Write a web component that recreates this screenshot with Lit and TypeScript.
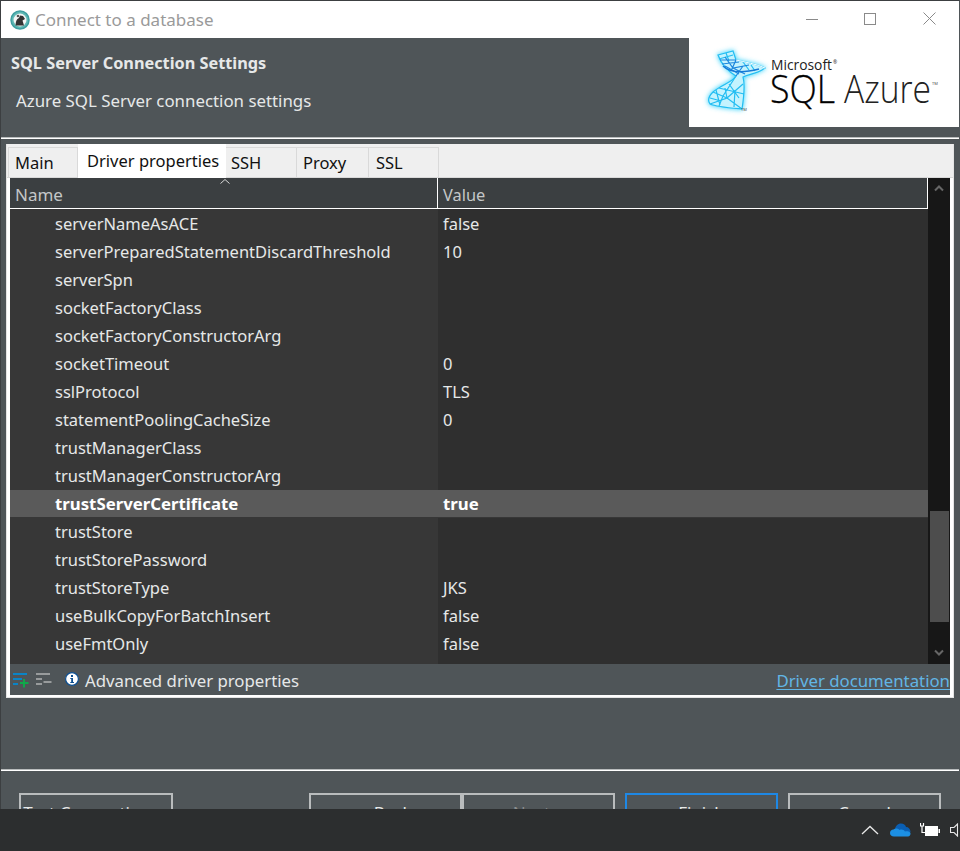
import { LitElement, html, css, svg } from 'lit';
import { customElement } from 'lit/decorators.js';

const ROWS: [string, string][] = [
  ['serverNameAsACE', 'false'],
  ['serverPreparedStatementDiscardThreshold', '10'],
  ['serverSpn', ''],
  ['socketFactoryClass', ''],
  ['socketFactoryConstructorArg', ''],
  ['socketTimeout', '0'],
  ['sslProtocol', 'TLS'],
  ['statementPoolingCacheSize', '0'],
  ['trustManagerClass', ''],
  ['trustManagerConstructorArg', ''],
  ['trustServerCertificate', 'true'],
  ['trustStore', ''],
  ['trustStorePassword', ''],
  ['trustStoreType', 'JKS'],
  ['useBulkCopyForBatchInsert', 'false'],
  ['useFmtOnly', 'false'],
];

const TABS = [
  { label: 'Main', width: 70, pad: 6 },
  { label: 'Driver properties', width: 148, pad: 9 },
  { label: 'SSH', width: 71, pad: 5 },
  { label: 'Proxy', width: 72, pad: 6 },
  { label: 'SSL', width: 70, pad: 7 },
];

const HELIX_D = 'M29 17L44 13L47 22C55 24 68 26 76 30C68 36 60 36 54 39C56 46 55 58 53 71C42 70 28 69 21 66C18 62 20 58 24 54C32 47 44 44 47 38C40 34 32 26 29 17Z';

// helix lattice of the logo
const helix = svg`
  <defs>
    <filter id="glow" x="-40%" y="-40%" width="180%" height="180%"><feGaussianBlur stdDeviation="2.6"/></filter>
  </defs>
  <path d=${HELIX_D} fill="#45d6fb" stroke="#45d6fb" stroke-width="2" filter="url(#glow)"/>
  <path d=${HELIX_D} fill="#c4f3fe"/>
  <g fill="none" stroke="#22bdf2" stroke-width="1.2">
    <path d=${HELIX_D}/>
    <path d="M24 54L38 60L53 71M21 66L38 60L36 50M30 68L34 58L47 38M45 69L46 52M38 60L54 46M30 50L55 56M21 60L32 63M27 52L31 67M40 46L50 60"/>
    <path d="M30 21L44 17M37 15L40 23M54 24L60 32M62 27L66 33"/>
  </g>
  <g fill="none" stroke="#1b86dd" stroke-width="1.2">
    <path d="M31 22L47 22L42 33M36 19L44 30L60 27M33 26L50 24M44 30L56 36M47 38L54 28M36 28L50 36"/>
  </g>
  <path d="M47 22C55 24 68 26 76 30" fill="none" stroke="#fff" stroke-width="1"/>
  <path d="M34 28C42 36 58 34 70 31" fill="none" stroke="#1679d6" stroke-width="1.4"/>
`;

@customElement('app-root')
export class AppRoot extends LitElement {
  static styles = css`
    :host {
      display: block;
      width: 960px;
      height: 851px;
      overflow: hidden;
      font-family: "Noto Sans", "Liberation Sans", sans-serif;
      font-size: 16.8px;
      color: #e6e8e8;
    }
    .dialog {
      height: 809px;
      box-sizing: border-box;
      overflow: hidden;
      border-top: 1px solid #3c3f41;
      border-left: 1px solid #3c3f41;
      border-right: 1px solid #4f5558;
      background: #4f5558;
    }
    .titlebar {
      height: 37px;
      background: #fff;
      display: flex;
      align-items: center;
      padding-left: 9px;
      color: #9a9a9a;
      font-size: 17px;
    }
    .app-icon { width: 20px; height: 20px; margin-right: 5px; }
    .win-btns { margin-left: auto; display: flex; padding-bottom: 2px; }
    .win-btn { width: 59px; height: 35px; box-sizing: border-box; display: flex; align-items: center; justify-content: center; }
    .win-btn:nth-child(2) { padding-right: 2px; }
    .header {
      height: 89px;
      display: flex;
      justify-content: space-between;
    }
    .header-text { padding: 15px 0 0 10px; }
    .header-title { font-weight: 700; font-size: 16.3px; line-height: 21px; }
    .header-sub { padding: 15px 0 0 5px; font-size: 16.85px; line-height: 23px; }
    .logo { width: 270px; height: 89px; background: #fff; display: block; }
    .sep {
      height: 2px;
      background: linear-gradient(#b9bcbd 50%, #fff 50%);
    }
    .sep-top { margin-top: 10px; }
    .panel {
      margin: 5px 5px 0 5px;
      height: 554px;
      box-sizing: border-box;
      background: #fff;
      border: 1px solid #e4e4e4;
      border-top: 0;
      display: flex;
      flex-direction: column;
    }
    .tabs {
      height: 33px;
      flex: none;
      background: #efefef;
      display: flex;
      align-items: flex-end;
      padding-left: 1px;
      border-bottom: 1px solid #d9d9d9;
      box-sizing: content-box;
    }
    .tab {
      height: 30px;
      box-sizing: border-box;
      border: 1px solid #d9d9d9;
      border-bottom: 0;
      border-left: 0;
      color: #111;
      line-height: 30px;
      font-size: 16.5px;
      background: #efefef;
    }
    .tab:first-child { border-left: 1px solid #d9d9d9; }
    .tab.active {
      background: #fff;
      border: 0;
      margin-bottom: -1px;
      height: 34px;
      line-height: 34px;
    }
    .body {
      flex: 1;
      min-height: 0;
      display: flex;
      flex-direction: column;
      margin: 0 3px 2px 3px;
    }
    .table { flex: 1; min-height: 0; display: flex; background: #2f2f2f; position: relative; }
    .grid { flex: 1; min-width: 0; display: flex; flex-direction: column; }
    .thead {
      height: 31px;
      flex: none;
      display: flex;
      box-sizing: border-box;
      background: #3b3f41;
      border-bottom: 1px solid #fff;
      border-right: 1px solid #fff;
      color: #c4c7c8;
    }
    .sort {
      position: absolute;
      left: 210px;
      top: 1px;
      width: 10px;
      height: 5px;
    }
    .cell-name { width: 428px; box-sizing: border-box; flex: none; }
    .cell-val { padding-left: 5px; flex: 1; }
    .thead .cell-name {
      padding-left: 5px;
      line-height: 33px;
      font-size: 17px;
      border-right: 1px solid #fff;
    }
    .thead .cell-val { line-height: 33px; font-size: 16.4px; }
    .tbody {
      flex: 1;
      padding-top: 1px;
      background: linear-gradient(to right, #373737 428px, #2f2f2f 428px);
    }
    .row { height: 28px; display: flex; color: #e6e8e8; font-size: 16.5px; }
    .row .cell-name { padding-left: 45px; line-height: 27px; }
    .row .cell-val { line-height: 27px; }
    .row.sel {
      background: #5a5a5a;
      font-weight: 700;
      color: #fff;
      font-size: 16.8px;
      border-bottom: 1px solid #373737;
      box-sizing: border-box;
    }
    .scrollbar {
      width: 22px;
      flex: none;
      background: #171717;
      display: flex;
      flex-direction: column;
      align-items: center;
      position: relative;
    }
    .scrollbar svg { display: block; }
    .arrow-up { margin-top: 6px; }
    .arrow-down { margin-top: auto; margin-bottom: 7px; }
    .thumb {
      position: absolute;
      left: 2px;
      right: 1px;
      top: 333px;
      height: 111px;
      background: #4d4d4d;
    }
    .toolbar {
      height: 31px;
      flex: none;
      background: #4f5558;
      display: flex;
      align-items: center;
      padding-left: 3px;
    }
    .toolbar svg { display: block; flex: none; }
    .toolbar span { padding-top: 2px; }
    .tool-1 { margin-top: 2px; }
    .tool-2 { margin-left: 7px; }
    .tool-info { margin-left: 13px; margin-right: 6px; margin-top: -1px; }
    .doc-link {
      margin-left: auto;
      color: #62b5e5;
      text-decoration: underline;
      text-underline-offset: 2px;
    }
    .sep-bottom { margin-top: 71px; }
    .buttons {
      display: flex;
      padding: 22px 0 0 18px;
    }
    .btn {
      width: 153px;
      height: 40px;
      flex: none;
      box-sizing: border-box;
      border: 2px solid #b9bcbd;
      text-align: center;
      line-height: 36px;
      font-size: 17px;
      color: #e6e8e8;
    }
    .btn-test { width: 154px; }
    .btn-back { margin-left: 136px; }
    .btn-next { color: #8a8d8e; }
    .btn-finish { margin-left: 10px; border-color: #1e88e5; }
    .btn-cancel { margin-left: 10px; }
    .taskbar {
      height: 42px;
      background: #2c2e2f;
      display: flex;
      align-items: center;
      justify-content: flex-end;
    }
    .taskbar svg { display: block; flex: none; }
    .tray-up { margin-right: 11px; }
    .tray-cloud { margin-right: 9px; }
    .tray-batt { margin-right: 10px; }
  `;

  render() {
    return html`
      <div class="dialog">
        <div class="titlebar">
          <svg class="app-icon" viewBox="0 0 20 20">
            <circle cx="10" cy="10" r="9" fill="#5fb9b5" stroke="#3f9ea0" stroke-width="1.5"/>
            <circle cx="10" cy="10" r="6.5" fill="#f4f4f4"/>
            <path d="M5.5 15.5C6 11 6.5 9 9 8L10 5.5L13 6L15 9L12.5 10.5L14 15.5Z" fill="#333"/>
            <circle cx="8" cy="6" r="1.3" fill="#555"/>
          </svg>
          Connect to a database
          <div class="win-btns">
            <div class="win-btn"><svg width="12" height="12"><path d="M0 6.5H12" stroke="#8a8a8a"/></svg></div>
            <div class="win-btn"><svg width="12" height="12"><rect x=".5" y=".5" width="11" height="11" fill="none" stroke="#8a8a8a"/></svg></div>
            <div class="win-btn"><svg width="13" height="13"><path d="M.5 .5L12.5 12.5M12.5 .5L.5 12.5" stroke="#8a8a8a"/></svg></div>
          </div>
        </div>
        <div class="header">
          <div class="header-text">
            <div class="header-title">SQL Server Connection Settings</div>
            <div class="header-sub">Azure SQL Server connection settings</div>
          </div>
          <svg class="logo" viewBox="0 0 270 89">
            ${helix}
            <text x="82" y="32" font-family="Open Sans, sans-serif" font-size="14" fill="#222" textLength="61" lengthAdjust="spacingAndGlyphs">Microsoft</text>
            <text x="144" y="26" font-family="Open Sans, sans-serif" font-size="5" fill="#222">®</text>
            <text x="81" y="65" font-family="Open Sans, sans-serif" font-size="38" font-weight="300" fill="#000" stroke="#000" stroke-width=".3" textLength="65" lengthAdjust="spacingAndGlyphs">SQL</text>
            <text x="155" y="65" font-family="Open Sans, sans-serif" font-size="38" font-weight="300" fill="#222" textLength="87" lengthAdjust="spacingAndGlyphs">Azure</text>
            <text x="243" y="47" font-family="Open Sans, sans-serif" font-size="4" fill="#444">TM</text>
            <text x="52" y="73" font-family="Open Sans, sans-serif" font-size="4" fill="#444">TM</text>
          </svg>
        </div>
        <div class="sep sep-top"></div>
        <div class="panel">
          <div class="tabs">
            ${TABS.map((t, i) => html`<div class="tab ${i === 1 ? 'active' : ''}" style="width:${t.width}px;padding-left:${t.pad}px">${t.label}</div>`)}
          </div>
          <div class="body">
            <div class="table">
              <svg class="sort" viewBox="0 0 10 5"><path d="M.5 4.5L5 .5L9.5 4.5" fill="none" stroke="#d8d8d8"/></svg>
              <div class="grid">
                <div class="thead">
                  <div class="cell-name">Name</div>
                  <div class="cell-val">Value</div>
                </div>
                <div class="tbody">
                  ${ROWS.map(([n, v]) => html`
                    <div class="row ${n === 'trustServerCertificate' ? 'sel' : ''}">
                      <div class="cell-name">${n}</div>
                      <div class="cell-val">${v}</div>
                    </div>`)}
                </div>
              </div>
              <div class="scrollbar">
                <svg class="arrow-up" width="10" height="8"><path d="M1 6.5L5 2.5L9 6.5" fill="none" stroke="#666" stroke-width="2"/></svg>
                <div class="thumb"></div>
                <svg class="arrow-down" width="10" height="8"><path d="M1 1.5L5 5.5L9 1.5" fill="none" stroke="#666" stroke-width="2"/></svg>
              </div>
            </div>
            <div class="toolbar">
              <svg class="tool-1" width="16" height="15" viewBox="0 0 16 15">
                <path d="M0 0H14V2H0ZM0 5H9V7H0ZM0 10H5V12H0Z" fill="#0a84c6"/>
                <path d="M7 9H15.5V11H7ZM10 6H12V14.5H10Z" fill="#10a84a"/>
              </svg>
              <svg class="tool-2 tool-1" width="16" height="15" viewBox="0 0 16 15">
                <path d="M0 0H14V2H0ZM0 5H6V7H0ZM0 10H6V12H0ZM7.5 8H15.5V10H7.5Z" fill="#989b9c"/>
              </svg>
              <svg class="tool-info" width="14" height="14" viewBox="0 0 14 14">
                <circle cx="7" cy="7" r="6.4" fill="#fff" stroke="#0d4f91" stroke-width="1.2"/>
                <path d="M6 3H8V5H6ZM5.3 6H8V10H9V11H5.3V10H6.2V7H5.3Z" fill="#0d4f91"/>
              </svg>
              <span>Advanced driver properties</span>
              <span class="doc-link">Driver documentation</span>
            </div>
          </div>
        </div>
        <div class="sep sep-bottom"></div>
        <div class="buttons">
          <div class="btn btn-test">Test Connection ...</div>
          <div class="btn btn-back">&lt; Back</div>
          <div class="btn btn-next">Next &gt;</div>
          <div class="btn btn-finish">Finish</div>
          <div class="btn btn-cancel">Cancel</div>
        </div>
      </div>
      <div class="taskbar">
        <svg class="tray-up" width="18" height="10" viewBox="0 0 18 10"><path d="M1 9L9 1.5L17 9" fill="none" stroke="#e8e8e8" stroke-width="1.3"/></svg>
        <svg class="tray-cloud" width="21" height="14" viewBox="0 0 21 14">
          <path d="M5 7C5 3 8 .5 11 .5C13.5 .5 15.5 2 16 4C18.5 4 20.5 6 20.5 9H9Z" fill="#0a5fb4"/>
          <path d="M4 13.5C1.5 13.5 0 12 0 10C0 8 1.5 6.5 3.5 6.5C5 5 8 5 9.5 7C12 6 14 7 15 8.5C17 8 20 8.5 20.5 10C20.7 12 19.5 13.5 18 13.5Z" fill="#1c8fe3"/>
        </svg>
        <svg class="tray-batt" width="20" height="14" viewBox="0 0 20 14">
          <path d="M.5 0V3H3.5V0M2 3V9.5H5" fill="none" stroke="#fff" stroke-width="1.2"/>
          <rect x="5" y="3" width="13" height="10" fill="#fff"/>
          <rect x="18.5" y="6" width="1.5" height="4" fill="#fff"/>
        </svg>
        <svg width="10" height="14" viewBox="0 0 10 14"><path d="M.5 4.5H4L7.5 1V13L4 9.5H.5Z" fill="none" stroke="#e8e8e8" stroke-width="1.1"/></svg>
      </div>
    `;
  }
}
